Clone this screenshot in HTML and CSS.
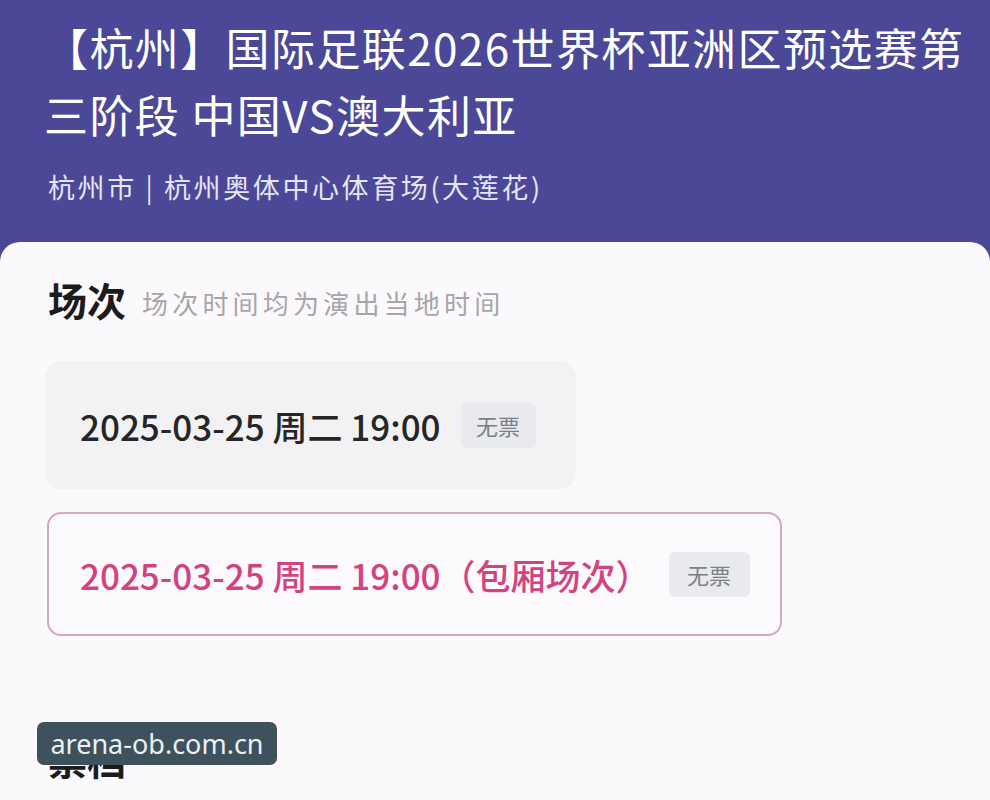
FILE: index.html
```html
<!DOCTYPE html>
<html lang="zh-CN">
<head>
    <meta charset="UTF-8">
    <meta name="viewport" content="width=device-width, initial-scale=1.0">
    <title>【杭州】国际足联2026世界杯亚洲区预选赛第三阶段 中国VS澳大利亚</title>
    <link rel="stylesheet" href="styles.css">
</head>
<body>
    <div class="page">
        <div class="header">
            <h1 class="title">【杭州】国际足联2026世界杯亚洲区预选赛第三阶段 中国VS澳大利亚</h1>
            <p class="venue">杭州市 | 杭州奥体中心体育场(大莲花)</p>
        </div>

        <div class="sheet">
            <div class="section-head">
                <h2>场次</h2>
                <span class="section-tip">场次时间均为演出当地时间</span>
            </div>

            <div class="sessions">
                <div class="session">
                    <span class="session-time">2025-03-25 周二 19:00</span>
                    <span class="badge">无票</span>
                </div>
                <div class="session session-selected">
                    <span class="session-time">2025-03-25 周二 19:00（包厢场次）</span>
                    <span class="badge">无票</span>
                </div>
            </div>

            <div class="section-head section-tiers">
                <h2>票档</h2>
            </div>
        </div>
    </div>

    <div class="watermark">arena-ob.com.cn</div>
</body>
</html>
```

FILE: styles.css
```css
body {
    margin: 0;
    font-family: "Noto Sans CJK SC", "Noto Sans", sans-serif;
    background-color: #fcf9fc;
    color: #222;
}

.page {
    min-height: 100vh;
    display: flex;
    flex-direction: column;
    background-color: #4b4898;
}

.header {
    padding: 14px 20px 36px 48px;
    color: #fff;
}

.title {
    margin: 0 0 0 -4px;
    font-size: 44px;
    font-weight: 400;
    line-height: 67px;
    letter-spacing: 1.4px;
}

.venue {
    margin: 20px 0 0;
    font-size: 27px;
    line-height: 38px;
    letter-spacing: 2.6px;
    color: #e6e5f3;
}

.sheet {
    flex: 1;
    background-color: #fcf9fc;
    border-radius: 20px 20px 0 0;
    padding: 33px 48px 0;
}

.section-head {
    display: flex;
    align-items: center;
    gap: 16px;
    height: 48px;
}

.section-head h2 {
    margin: 0;
    font-size: 39px;
    font-weight: 700;
    color: #1c1c1c;
}

.section-tip {
    font-size: 26px;
    letter-spacing: 4.2px;
    color: #a6a5a9;
    padding-top: 6px;
}

.sessions {
    display: flex;
    flex-direction: column;
    align-items: flex-start;
    gap: 23px;
    margin-top: 38px;
    margin-left: -3px;
}

.session {
    display: flex;
    align-items: center;
    gap: 20px;
    height: 128px;
    box-sizing: border-box;
    padding: 0 40px 0 35px;
    background-color: #f2f2f4;
    border-radius: 16px;
}

.session-time {
    font-size: 35px;
    font-weight: 500;
    color: #262626;
}

.badge {
    display: inline-flex;
    align-items: center;
    justify-content: center;
    width: 75px;
    height: 45px;
    font-size: 22px;
    color: #7c7f86;
    background-color: #e8eaee;
    border-radius: 6px;
}

.session-selected {
    height: 124px;
    margin-left: 2px;
    padding: 0 30px 0 31px;
    gap: 18px;
    background-color: #fdfafd;
    border: 2px solid #d2a9c0;
    border-radius: 14px;
}

.session-selected .session-time {
    color: #d2437f;
}

.session-selected .badge {
    width: 81px;
}

.section-tiers {
    margin-top: 98px;
}

.watermark {
    position: absolute;
    left: 37px;
    top: 722px;
    width: 240px;
    height: 43px;
    display: flex;
    align-items: center;
    justify-content: center;
    background-color: #3f515c;
    border-radius: 7px;
    color: #eaf1f4;
    font-family: "Noto Sans", sans-serif;
    font-size: 27px;
}
```
